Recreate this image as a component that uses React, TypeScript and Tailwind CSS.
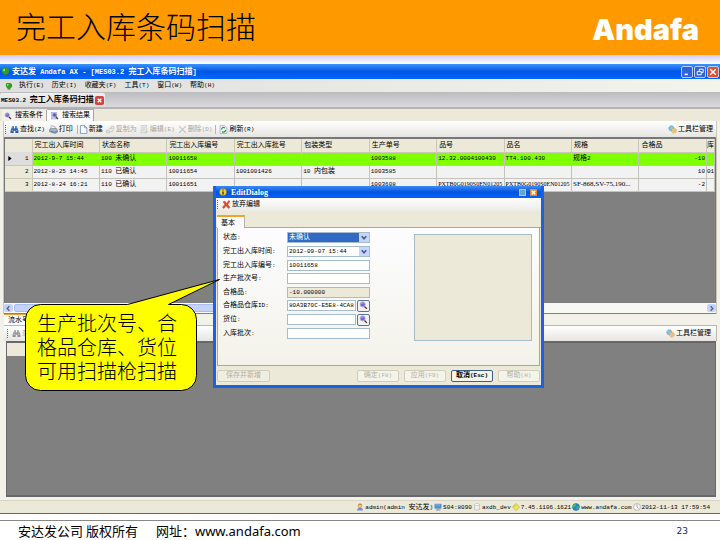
import React from 'react';
import clsx from 'clsx';

interface TextProps {
  text: string;
  latin?: string;
}

// CJK glyphs are full width, latin runs are set a size smaller in mono
function Mixed({ text, latin = 'text-[6px]' }: TextProps): React.JSX.Element {
  const parts = text.split(/([\x20-\x7e]+)/).filter(Boolean);
  return (
    <span className="whitespace-pre">
      {parts.map((part, i) =>
        /^[\x20-\x7e]/.test(part) ? (
          <span key={i} className={latin}>{part}</span>
        ) : (
          <span key={i}>{part}</span>
        )
      )}
    </span>
  );
}

type IconName =
  | 'orb' | 'find' | 'search' | 'results' | 'print' | 'new' | 'copy' | 'edit' | 'remove' | 'refresh'
  | 'gears' | 'user' | 'server' | 'db' | 'version' | 'globe' | 'clock' | 'cross' | 'info';

const shapes: Record<IconName, React.ReactNode> = {
  orb: (
    <>
      <path d="M1.500 7Q1 2 6 1.500Q8 3 10 1.500Q15 3 14.500 8Q13 13 8 14Q2 12 1.500 7Z" fill="#2f9e26" />
      <path d="M4 6Q4 3 7 4Q8 6 5 8Z" fill="#b5f09a" />
      <path d="M5 14h6" stroke="#4b6b3c" strokeWidth="2" />
    </>
  ),
  find: (
    <>
      <path d="M4 2h3v4h2V2h3l3 8v4H9.500v-4h-3v4H1v-4Z" fill="#2a5fae" />
      <path d="M3 9.500h2.500M10.500 9.500H13M5 4v2M11 4v2" stroke="#a9cbf5" strokeWidth="1.500" />
    </>
  ),
  search: (
    <>
      <path d="M9 9l5 5" stroke="#4a3a3a" strokeWidth="2.500" />
      <circle cx="6.500" cy="6" r="4.500" fill="#7468c8" stroke="#b9b4dd" strokeWidth="1.500" />
      <path d="M4 5Q6 3 8 4" stroke="#d6d2ff" fill="none" />
    </>
  ),
  results: (
    <>
      <rect x="1" y="1" width="10" height="13" fill="#cfd4ee" stroke="#8c92bb" />
      <path d="M9 9l5 5" stroke="#4a3a3a" strokeWidth="2.500" />
      <circle cx="7" cy="6" r="4" fill="#6558bd" stroke="#aaa3dc" strokeWidth="1.500" />
    </>
  ),
  print: (
    <>
      <path d="M4 1l7 2-1 5H3Z" fill="#fff" stroke="#7d8794" />
      <path d="M1 8l3-2h9l2 3v4l-4 2-10-3Z" fill="#a8b6c8" stroke="#5c6978" />
      <path d="M3 11l7 2 4-2" stroke="#3d72b9" strokeWidth="1.500" fill="none" />
    </>
  ),
  new: <path d="M2.500 1H10l4 4v10H2.500ZM10 1v4h4" fill="#fafdff" stroke="#5e83b3" strokeWidth="1.300" />,
  copy: (
    <path d="M1 9h5v5H1ZM5 6h4M9 2h5v5H9ZM6 12h5l2-3" fill="#dcdcdc" stroke="#aaa" strokeWidth="1.500" />
  ),
  edit: (
    <>
      <rect x="2" y="1" width="10" height="13" fill="#eee" stroke="#aaa" strokeWidth="1.300" />
      <path d="M4 4h6M4 7h6M4 10h4M8 13l6-2" stroke="#aaa" strokeWidth="1.500" />
    </>
  ),
  remove: <path d="M2 2l12 12M14 2L2 14" stroke="#a3a3a3" strokeWidth="1.800" />,
  refresh: (
    <>
      <path d="M2 1h8l4 4v10H2Z" fill="#f5fbff" stroke="#7090b8" />
      <path d="M4.500 8a3.500 3.500 0 0 1 6-2.500M11.500 8.500a3.500 3.500 0 0 1-6 3" fill="none" stroke="#2d9b35" strokeWidth="2.200" />
    </>
  ),
  gears: (
    <>
      <circle cx="6" cy="6" r="4.500" fill="#84c4e8" stroke="#5797bd" strokeDasharray="2 1" strokeWidth="1.500" />
      <circle cx="10.500" cy="10" r="4.300" fill="#f4ce85" stroke="#d09a48" strokeDasharray="2 1" strokeWidth="1.500" />
      <circle cx="10.500" cy="10" r="1.500" fill="#fff" stroke="#b98d4a" />
    </>
  ),
  user: (
    <>
      <path d="M2 15q0-6 6-6t6 6Z" fill="#6d9be0" />
      <path d="M6.500 9h3l-1.500 6Z" fill="#e55d3c" />
      <circle cx="8" cy="5.500" r="3.700" fill="#f8cda0" stroke="#b07a3a" />
      <path d="M4 5q0-4 4-4t4 4q-4-2-8 0" fill="#c88a35" />
    </>
  ),
  server: (
    <>
      <rect x="1.500" y="2" width="13" height="9" rx="1" fill="#4d91d8" stroke="#7894b0" />
      <path d="M3 4h9" stroke="#b8dcfa" />
      <path d="M4 14h9M8 11v3" stroke="#8794a3" strokeWidth="2" />
    </>
  ),
  db: (
    <>
      <path d="M3 3v10q5 3 10 0V3" fill="#efefef" stroke="#aaa" />
      <ellipse cx="8" cy="3" rx="5" ry="2" fill="#fff" stroke="#aaa" />
    </>
  ),
  version: <path d="M8 1l7 7-7 7-7-7ZM4.500 8L8 4.500" fill="#f0e850" stroke="#aaa329" strokeWidth="1.200" />,
  globe: (
    <>
      <circle cx="8" cy="8" r="7" fill="#2489c9" stroke="#17619c" />
      <path d="M3 3q4-2 6 1l-3 4-4 1Q1 5 3 3ZM9 8l5-2q1 5-4 8Z" fill="#4fb65a" />
    </>
  ),
  clock: (
    <>
      <circle cx="8" cy="8" r="6.800" fill="#fafafa" stroke="#999" strokeWidth="1.300" />
      <path d="M8 3v5l3 3" stroke="#777" strokeWidth="1.300" fill="none" />
    </>
  ),
  cross: <path d="M2 3l3-1 3 4 4-5 2 1-4 6 4 5-2 2-5-5-4 5-2-2 4-5Z" fill="#e2492f" stroke="#c03a28" />,
  info: (
    <>
      <circle cx="8" cy="8" r="7" fill="#f6cf3d" stroke="#9b7a14" />
      <path d="M8 3v2M8 7v6" stroke="#222" strokeWidth="2.500" />
    </>
  ),
};

function Icon({ name, className = 'h-2 w-2' }: { name: IconName; className?: string }): React.JSX.Element {
  return (
    <svg viewBox="0 0 16 16" className={clsx('shrink-0', className)} aria-hidden="true">
      {shapes[name]}
    </svg>
  );
}

function ToolButton({ icon, text, disabled }: { icon: IconName; text: string; disabled?: boolean }): React.JSX.Element {
  return (
    <button
      type="button"
      disabled={disabled}
      className={clsx('flex items-center gap-px', disabled ? 'text-[#a9a79f]' : 'text-black')}
    >
      <Icon name={icon} className={clsx('h-[9px] w-[9px]', disabled && 'opacity-60 grayscale')} />
      <Mixed text={text} />
    </button>
  );
}

function Grip(): React.JSX.Element {
  return <span className="mr-1 h-[9px] border-l border-dotted border-[#4a66a0]" />;
}

function WindowButtons(): React.JSX.Element {
  const base = 'flex h-3 w-3 items-center justify-center rounded-[2px] border border-[#b8cdf5]';
  return (
    <div className="flex gap-px">
      <button type="button" aria-label="Minimize" className={clsx(base, 'bg-[#2f62dc]')}>
        <svg viewBox="0 0 10 10" className="h-2 w-2"><path d="M2 8h4" stroke="#fff" strokeWidth="2" /></svg>
      </button>
      <button type="button" aria-label="Restore" className={clsx(base, 'bg-[#2f62dc]')}>
        <svg viewBox="0 0 10 10" className="h-2 w-2">
          <path d="M4 4V1.500h5v4H6.500M1.500 4.500h5v4h-5Z" fill="none" stroke="#fff" strokeWidth="1.200" />
        </svg>
      </button>
      <button type="button" aria-label="Close" className={clsx(base, 'bg-[#dc5235]')}>
        <svg viewBox="0 0 10 10" className="h-2 w-2"><path d="M1.500 1.500l7 7M8.500 1.500l-7 7" stroke="#fff" strokeWidth="1.800" /></svg>
      </button>
    </div>
  );
}

const menus = ['执行(E)', '历史(I)', '收藏夹(F)', '工具(T)', '窗口(W)', '帮助(H)'];

const columns = ['完工出入库时间', '状态名称', '完工出入库编号', '完工出入库批号', '包装类型', '生产单号', '品号', '品名', '规格', '合格品', '库'];

const rows = [
  ['2012-9-7 15:44', '100 未确认', '10011658', '', '', '1003588', '12.32.0004100430', 'TT4.100.430', '规格2', '-10', ''],
  ['2012-8-25 14:45', '110 已确认', '10011654', '1001001426', '10 内包装', '1003585', '', '', '', '10', '01'],
  ['2012-8-24 16:21', '110 已确认', '10011651', '', '', '1003608', 'PXTB0G0190S0EN01205', 'PXTB0G0190S0EN01205', 'SF-868,SV-75,190...', '-2', ''],
];

// long codes need a narrower face to fit their column
function latinClass(cell: string): string | undefined {
  if (cell.length < 18) return undefined;
  return cell.includes(',')
    ? "font-['Liberation_Serif',serif] text-[7px]"
    : "font-['Liberation_Serif',serif] text-[6px]";
}

function ResultTable(): React.JSX.Element {
  return (
    <table className="w-full table-fixed border-collapse">
      <colgroup>
        <col className="w-[27px]" />
        {columns.map((c) => (
          <col key={c} className={c === '库' ? 'w-2' : undefined} />
        ))}
      </colgroup>
      <thead>
        <tr className="h-[13px] bg-[#ece9d8]">
          <th className="border-r border-[#cbc8b8]" />
          {columns.map((c) => (
            <th key={c} className={clsx('overflow-hidden border-r border-b border-[#cbc8b8] p-0 text-left font-normal', c !== '库' && 'pl-[2px]')}>
              <Mixed text={c} />
            </th>
          ))}
        </tr>
      </thead>
      <tbody>
        {rows.map((row, i) => (
          <tr key={row[0]} className={clsx('h-[13px]', i === 0 ? 'bg-[#80ff00]' : 'bg-[#f2f2f2]')}>
            <th className={clsx('border-r border-b border-[#cbc8b8] p-0 font-normal', i === 0 ? 'bg-[#dedede]' : 'bg-[#ece9d8]')}>
              <div className="flex items-center justify-between pr-[3px] pl-[3px]">
                <svg viewBox="0 0 4 6" className="h-[5px] w-1">{i === 0 && <path d="M0 0l4 3-4 3Z" />}</svg>
                <Mixed text={String(i + 1)} />
              </div>
            </th>
            {row.map((cell, j) => (
              <td
                key={j}
                className={clsx(
                  'overflow-hidden border-r border-b border-[#c3c3bb] p-0',
                  j === 9 && 'pr-px text-right',
                  j < 9 && 'pl-px'
                )}
              >
                <Mixed text={cell} latin={latinClass(cell)} />
              </td>
            ))}
          </tr>
        ))}
      </tbody>
    </table>
  );
}

function Field({ id, label, children }: { id: string; label: string; children: React.ReactNode }): React.JSX.Element {
  return (
    <div className="flex flex-1 items-center">
      <label htmlFor={id} className="w-16 shrink-0"><Mixed text={label} /></label>
      <div className="flex w-[83px] items-center gap-px">{children}</div>
    </div>
  );
}

const inputClass = 'h-[11px] w-full min-w-0 border border-[#a5bccd] px-px text-[6px] text-black';

function Drop({ id, value, selected }: { id: string; value: string; selected?: boolean }): React.JSX.Element {
  return (
    <div className="relative w-full">
      <select
        id={id}
        className={clsx(
          'block h-[11px] w-full appearance-none border border-[#a5bccd] px-px',
          selected ? 'bg-[#316ac5] text-[7px] text-white' : 'bg-white text-[6px]'
        )}
      >
        <option>{value}</option>
      </select>
      <svg viewBox="0 0 10 10" className="pointer-events-none absolute top-px right-px h-[9px] w-[10px] bg-[#c5d5fb]">
        <path d="M2.500 3.500L5 6.500l2.500-3" fill="none" stroke="#3d5c95" strokeWidth="1.700" />
      </svg>
    </div>
  );
}

function LookupButton({ label }: { label: string }): React.JSX.Element {
  return (
    <button type="button" aria-label={label} className="flex h-3 w-[13px] shrink-0 items-center justify-center rounded-[2px] border border-[#5b7396] bg-[#f2f2ee]">
      <Icon name="search" className="h-[9px] w-[9px]" />
    </button>
  );
}

function DialogButton({ text, active }: { text: string; active?: boolean }): React.JSX.Element {
  return (
    <button
      type="button"
      disabled={!active}
      className={clsx(
        'flex h-3 w-[42px] items-center justify-center rounded-[2px] border bg-[#f5f4ea]',
        active ? 'border-[#3f5f8b] font-bold text-black' : 'border-[#d0cdbd] text-[#b3b09f]'
      )}
    >
      <Mixed text={text} />
    </button>
  );
}

function EditDialog(): React.JSX.Element {
  return (
    <section className="absolute top-[122px] left-[213px] flex h-[202px] w-[331px] flex-col border-x-3 border-b-3 border-[#1763e4] bg-[#ece9d8]">
      <header className="flex h-3 shrink-0 items-center bg-linear-to-b from-[#3d8bf5] via-[#0054e3] to-[#0a62f5] pr-1 pl-px text-white">
        <Icon name="info" className="mx-[2px] h-2 w-2" />
        <h2 className="flex-1 pl-[2px] font-['Liberation_Serif',serif] text-[8px] font-bold">EditDialog</h2>
        <button type="button" aria-label="Maximize" className="mr-1 h-[7px] w-[7px] border border-[#a9c8ee] bg-[#6e9fd0]" />
        <button type="button" aria-label="Close" className="flex h-[7px] w-[7px] items-center justify-center bg-[#ee8720]">
          <svg viewBox="0 0 8 8" className="h-[7px] w-[7px]"><path d="M2 2l4 4M6 2L2 6" stroke="#fff" strokeWidth="1.800" /></svg>
        </button>
      </header>
      <div className="flex h-[13px] shrink-0 items-center bg-linear-to-b from-white to-[#ebeae6] pl-px">
        <Grip />
        <ToolButton icon="cross" text="放弃编辑" />
      </div>
      <div className="flex h-[17px] shrink-0 items-end border-b border-[#a9a799] pl-px">
        <button type="button" className="-mb-px h-[13px] w-7 border-t-2 border-r border-[#f0a42e] border-r-[#b5b3a5] bg-[#fcfcfe] pl-1 text-left leading-[10px]">
          基本
        </button>
      </div>
      <div className="mx-px flex flex-1 justify-between border border-t-0 border-[#a9a799] bg-linear-to-b from-[#fdfdff] to-[#f3f2ea] py-[3px] pr-[7px] pl-[5px]">
        <div className="flex h-[109px] flex-col">
          <Field id="status" label="状态:"><Drop id="status" value="未确认" selected /></Field>
          <Field id="time" label="完工出入库时间:"><Drop id="time" value="2012-09-07 15:44" /></Field>
          <Field id="code" label="完工出入库编号:"><input id="code" defaultValue="10011658" className={clsx(inputClass, 'bg-white')} /></Field>
          <Field id="batch" label="生产批次号:"><input id="batch" className={clsx(inputClass, 'bg-white')} /></Field>
          <Field id="good" label="合格品:"><input id="good" readOnly defaultValue="-10.000000" className={clsx(inputClass, 'bg-[#ece9d8]')} /></Field>
          <Field id="store" label="合格品仓库ID:">
            <input id="store" defaultValue="80A3B70C-E5E8-4CA8-1" className={clsx(inputClass, 'bg-white')} />
            <LookupButton label="仓库" />
          </Field>
          <Field id="slot" label="货位:">
            <input id="slot" className={clsx(inputClass, 'bg-white')} />
            <LookupButton label="货位" />
          </Field>
          <Field id="inbatch" label="入库批次:"><input id="inbatch" className={clsx(inputClass, 'bg-white')} /></Field>
        </div>
        <div className="mt-[3px] h-[107px] w-[118px] border border-[#a5bccd] bg-[#ece9d8]" />
      </div>
      <footer className="flex h-[19px] shrink-0 items-center gap-[5px] px-px">
        <button type="button" disabled className="mr-auto flex h-3 w-[53px] items-center justify-center rounded-[2px] border border-[#d0cdbd] bg-[#f0eee2] text-[#b3b09f]">
          保存并新增
        </button>
        <DialogButton text="确定(F8)" />
        <DialogButton text="应用(F9)" />
        <DialogButton text="取消(Esc)" active />
        <DialogButton text="帮助(H)" />
      </footer>
    </section>
  );
}

function Callout(): React.JSX.Element {
  return (
    <div className="absolute top-[214px] left-[25px] h-[114px] w-[196px]">
      <svg viewBox="0 0 196 114" className="absolute inset-0 h-full w-full">
        <path
          d="M15 26H102L194 1L143 26H156a15 15 0 0 1 15 15v56a15 15 0 0 1-15 15H15a15 15 0 0 1-15-15V41a15 15 0 0 1 15-15Z"
          transform="translate(.5 .5)"
          fill="#ff0"
          stroke="#000"
        />
      </svg>
      <p className="relative w-[160px] pt-9 pl-3 text-[20px] leading-6 font-light whitespace-nowrap">
        生产批次号、合<br />格品仓库、货位<br />可用扫描枪扫描
      </p>
    </div>
  );
}

const statusItems: { icon: IconName; text: string }[] = [
  { icon: 'user', text: 'admin(admin 安达发)' },
  { icon: 'server', text: 'S04:8090' },
  { icon: 'db', text: 'axdb_dev' },
  { icon: 'version', text: '7.45.1106.1621' },
  { icon: 'globe', text: 'www.andafa.com' },
  { icon: 'clock', text: '2012-11-13 17:59:54' },
];

function AppWindow(): React.JSX.Element {
  return (
    <main className="relative flex flex-1 flex-col border-b border-[#2f6fc4] bg-[#f3f2ea] font-['Liberation_Mono','Noto_Sans_CJK_SC',monospace] text-[7px] leading-[9px]">
      <header className="flex h-[15px] shrink-0 items-center bg-linear-to-b from-[#3a93ff] via-[#0055e5] to-[#0066ff] px-px text-white">
        <Icon name="orb" className="mr-[2px] h-[9px] w-[9px]" />
        <h2 className="flex-1 text-[8px] font-bold">
          <Mixed text="安达发 Andafa AX - [MES03.2 完工入库条码扫描]" latin="text-[7px]" />
        </h2>
        <WindowButtons />
      </header>
      <nav className="flex h-[13px] shrink-0 items-center gap-2 bg-linear-to-r from-[#dedede] to-[#f3f4ec] pl-[5px]">
        <Icon name="orb" className="-mr-[2px] h-2 w-2" />
        {menus.map((m) => (
          <button key={m} type="button"><Mixed text={m} /></button>
        ))}
      </nav>
      <div className="flex h-[17px] shrink-0 items-end border-b-2 border-[#b4b3b3] bg-linear-to-b from-[#bcbcbf] to-[#dadade]">
        <button type="button" className="flex h-[14px] items-center gap-px rounded-t-[2px] bg-linear-to-b from-[#f0f0f0] to-[#dcdcdc] px-px text-[8px] font-bold">
          <Mixed text="MES03.2 完工入库条码扫描" />
          <svg viewBox="0 0 10 10" className="h-[9px] w-[9px]">
            <rect width="10" height="10" rx="2" fill="#cf4545" />
            <path d="M3 3l4 4M7 3L3 7" stroke="#fff" strokeWidth="1.500" />
          </svg>
        </button>
      </div>
      <div className="flex h-3 shrink-0 items-end bg-[#ece9d8] pl-[2px]">
        <button type="button" className="flex h-[11px] w-[45px] items-center gap-px border-r border-[#aaa89a] bg-[#f3f2ea] pl-[2px]">
          <Icon name="search" className="mr-[2px] h-2 w-2" />搜索条件
        </button>
        <button type="button" className="flex h-3 w-[47px] items-center gap-px border-t border-r border-t-[#f0a42e] border-r-[#aaa89a] bg-[#fcfcfe] pl-1">
          <Icon name="results" className="mr-[2px] h-2 w-2" />搜索结果
        </button>
      </div>

      <section className="mr-[3px] ml-[3px] flex h-[193px] shrink-0 flex-col border-x border-[#c9c7ba]">
        <div className="flex h-4 shrink-0 items-center bg-linear-to-b from-white to-[#e6e5e1] pr-[3px] pl-px">
          <Grip />
          <div className="flex items-center gap-1">
            <ToolButton icon="find" text="查找(Z)" />
            <ToolButton icon="print" text="打印" />
          </div>
          <span className="mr-px ml-1 h-[9px] border-l border-[#b5b4ae]" />
          <div className="flex flex-1 items-center gap-[3px]">
            <ToolButton icon="new" text="新建" />
            <ToolButton icon="copy" text="复制为" disabled />
            <ToolButton icon="edit" text="编辑(E)" disabled />
            <ToolButton icon="remove" text="删除(D)" disabled />
            <span className="h-[9px] border-l border-[#b5b4ae]" />
            <ToolButton icon="refresh" text="刷新(R)" />
          </div>
          <ToolButton icon="gears" text="工具栏管理" />
        </div>
        <div className="flex-1 border-t-2 border-r border-l border-[#777] bg-[#808080]">
          <ResultTable />
        </div>
        <div className="flex h-[11px] shrink-0 items-center border-b border-[#808080] bg-[#f8f8f4]">
          <button type="button" aria-label="Scroll left" className="flex h-2 w-[9px] items-center justify-center rounded-[2px] bg-[#c5d3fb]">
            <svg viewBox="0 0 8 8" className="h-[7px] w-[7px]"><path d="M5 1.500L2.500 4 5 6.500" fill="none" stroke="#4d6185" strokeWidth="1.500" /></svg>
          </button>
          <div className="ml-px h-2 w-3/5 rounded-[2px] border border-[#a9bdf0] bg-[#c5d3fb]" />
          <button type="button" aria-label="Scroll right" className="ml-auto flex h-2 w-[9px] items-center justify-center rounded-[2px] bg-[#c5d3fb]">
            <svg viewBox="0 0 8 8" className="h-[7px] w-[7px]"><path d="M3 1.500L5.500 4 3 6.500" fill="none" stroke="#4d6185" strokeWidth="1.500" /></svg>
          </button>
        </div>
      </section>

      <section className="mr-[3px] ml-1 flex flex-1 flex-col pb-[3px]">
        <div className="flex h-3 shrink-0 items-end border-b border-[#b9b8ad]">
          <button type="button" className="h-[11px] border-t border-[#f0a42e] bg-[#fcfcfe] px-1">流水号</button>
        </div>
        <div className="flex h-[15px] shrink-0 items-center justify-between border-r border-[#b9b8ad] bg-linear-to-b from-white to-[#e6e5e1] pr-[5px] pl-[3px]">
          <div className="flex items-center">
            <Grip />
            <ToolButton icon="find" text="查找" disabled />
          </div>
          <ToolButton icon="gears" text="工具栏管理" />
        </div>
        <div className="mr-px ml-[2px] flex-1 border border-t-2 border-b-2 border-[#686868] bg-[#808080]">
          <div className="h-[13px] w-[67px] bg-[#ece9d8]" />
        </div>
      </section>

      <footer className="flex h-[13px] shrink-0 items-center justify-end gap-px border-t border-[#d8d5c4] bg-[#ece9d8] pr-[10px]">
        {statusItems.map((s) => (
          <span key={s.icon} className="flex items-center gap-px">
            <Icon name={s.icon} />
            <Mixed text={s.text} />
          </span>
        ))}
      </footer>

      <EditDialog />
      <Callout />
    </main>
  );
}

export default function App(): React.JSX.Element {
  return (
    <div className="flex min-h-screen flex-col bg-white font-['Noto_Sans_CJK_SC',sans-serif] text-black">
      <header className="flex h-[55px] items-start justify-between bg-[#ff9900] pr-[21px] pl-4">
        <h1 className="text-[30px] leading-[50px] font-light">完工入库条码扫描</h1>
        <div className="font-['Inter',sans-serif] text-[29px] leading-[60px] font-black text-white">Andafa</div>
      </header>
      <div className="h-[9px] bg-linear-to-b from-[#ccccff] to-white" />
      <AppWindow />
      <footer className="mt-[6px] flex h-5 items-center justify-between border-t border-[#888] pr-8 pl-[18px] text-[13px] leading-5">
        <p className="whitespace-pre">
          安达发公司 版权所有<span className="pl-[18px]">网址：</span>
          <a href="http://www.andafa.com" className="font-['Noto_Sans',sans-serif]">www.andafa.com</a>
        </p>
        <span className="font-['DejaVu_Sans',sans-serif] text-[9px] text-[#003366]">23</span>
      </footer>
    </div>
  );
}
